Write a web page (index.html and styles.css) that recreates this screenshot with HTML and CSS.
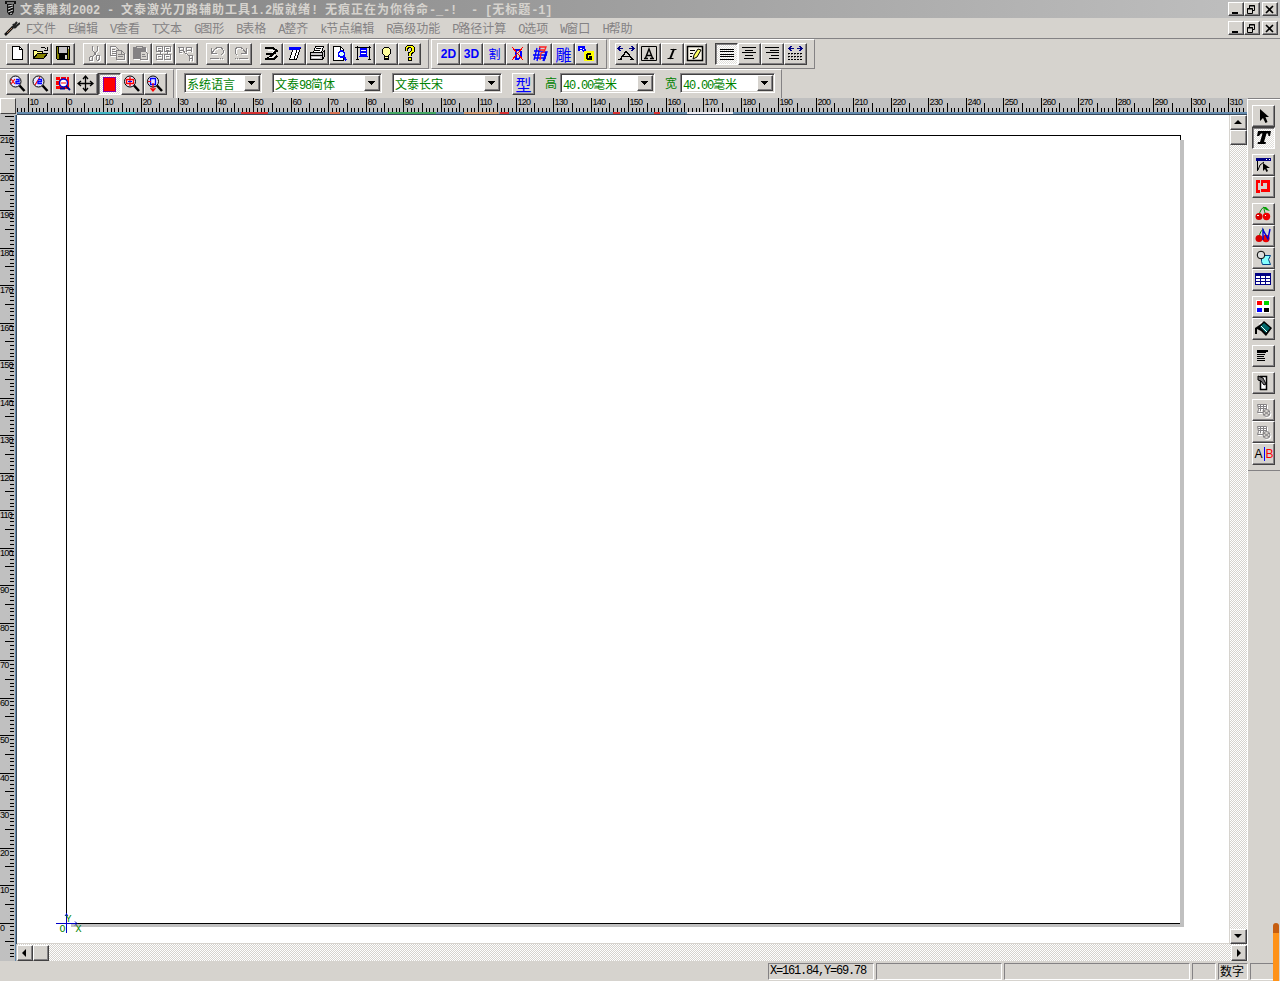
FILE: index.html
```html
<!DOCTYPE html>
<html lang="zh-CN">
<head>
    <meta charset="UTF-8">
    <title>文泰雕刻2002</title>
    <link rel="stylesheet" href="styles.css">
</head>
<body>
<div class="window">
    <header class="titlebar">
        <svg class="app-icon" viewBox="0 0 16 18"><path d="M3 1h11v3h-2v8l-2 3h-3l-2-3V4H3z" fill="#111"/><path d="M5 3h7M6 6l5-1M6 9l5-2M6 12l5-2M8 14l2-1" stroke="#ddd"/></svg>
        <h1>文泰雕刻<span>2002 - </span>文泰激光刀路辅助工具<span>1.2</span>版就绪<span>! </span>无痕正在为你待命<span>-_-!&nbsp; - [</span>无标题<span>-1]</span></h1>
        <div class="win-buttons">
            <button><svg viewBox="0 0 15 13"><path d="M4 9h6v2H4z"/></svg></button>
            <button><svg viewBox="0 0 15 13"><path d="M5.500 5V2.500h5v5H9M5 3h6M3.500 5.500h5v5h-5zM3 6h6" fill="none" stroke="#000"/></svg></button>
            <button><svg viewBox="0 0 15 13"><path d="M4 3l7 7M11 3l-7 7" stroke="#000" stroke-width="1.6"/></svg></button>
        </div>
    </header>
    <nav class="menubar">
        <svg class="app-icon" viewBox="0 0 18 20"><path d="M3 17l8-8" stroke="#111" stroke-width="2.500"/><path d="M10 10l5-6M12 10l6-5M11 6l3 4" stroke="#222" stroke-width="2"/><path d="M5 15l5-5" stroke="#a07050"/></svg>
        <ul>
            <li><span>F</span>文件</li>
            <li><span>E</span>编辑</li>
            <li><span>V</span>查看</li>
            <li><span>T</span>文本</li>
            <li><span>G</span>图形</li>
            <li><span>B</span>表格</li>
            <li><span>A</span>整齐</li>
            <li><span>k</span>节点编辑</li>
            <li><span>R</span>高级功能</li>
            <li><span>P</span>路径计算</li>
            <li><span>O</span>选项</li>
            <li><span>W</span>窗口</li>
            <li><span>H</span>帮助</li>
        </ul>
        <div class="win-buttons">
            <button><svg viewBox="0 0 15 13"><path d="M4 9h6v2H4z"/></svg></button>
            <button><svg viewBox="0 0 15 13"><path d="M5.500 5V2.500h5v5H9M5 3h6M3.500 5.500h5v5h-5zM3 6h6" fill="none" stroke="#000"/></svg></button>
            <button><svg viewBox="0 0 15 13"><path d="M4 3l7 7M11 3l-7 7" stroke="#000" stroke-width="1.6"/></svg></button>
        </div>
    </nav>

    <div class="toolbar-row">
        <div class="toolbar main-bar">
            <div class="group">
                <button class="tool"><svg viewBox="0 0 23 22"><path d="M6.500 3.500h7l3 3v10h-10z" fill="#fff" stroke="#000"/><path d="M13.500 3v3.500H17" fill="none" stroke="#000"/></svg></button>
                <button class="tool"><svg viewBox="0 0 23 22"><path d="M4.500 15.500v-8h3l1 1h5v3" fill="#ffff84" stroke="#000"/><path d="M4.500 15.500l4-5h10l-4 5z" fill="#848200" stroke="#000"/><path d="M11.500 5.500l1-1h3l2 2M18.500 3.500v3.500H15" fill="none" stroke="#000"/></svg></button>
                <button class="tool"><svg viewBox="0 0 23 22"><path d="M4.500 3.500h13v13h-12l-1-1z" fill="#848200" stroke="#000"/><path d="M7 4h8v6H7z" fill="#c6c3c6"/><path d="M7 11h9v5H7z" fill="#000"/><path d="M13 12h2v4h-2zM16 4h1v2h-1z" fill="#d6d3ce"/><path d="M6.500 4v6.500h9V4" fill="none" stroke="#000"/></svg></button>
            </div>
            <div class="group disabled">
                <button class="tool"><svg viewBox="0 0 23 22"><path d="M9.500 3v4l4 6M14.500 3v4l-4 6"/><path d="M7.500 13.500h2v4h-3v-3zM13.500 12.500h3v4l-2 1-1-1z"/></svg></button>
                <button class="tool"><svg viewBox="0 0 23 22"><path d="M4.500 3.500h5l3 3v6h-8zM6 6.500h3M6 8.500h5M6 10.500h5"/><path d="M10.500 7.500h5l3 3v6h-8z" fill="#d6d3ce"/><path d="M15.500 8v3H18M12 11.500h3M12 13.500h5"/></svg></button>
                <button class="tool"><svg viewBox="0 0 23 22"><path d="M4.500 4.500h12v11h-12z" fill="#848284"/><path d="M7.500 3.500h6v2h-6z" fill="#d6d3ce"/><path d="M11.500 8.500h5l2 2v6h-7z" fill="#d6d3ce"/><path d="M13 11.500h3M13 13.500h4"/></svg></button>
                <button class="tool"><svg viewBox="0 0 23 22"><path d="M4.500 3.500h6v5h-6zM12.500 3.500h6v5h-6zM4.500 11.500h6v5h-6zM12.500 11.500h6v5h-6zM6 5.500h3M6 7.500h3M14 5.500h3M14 7.500h3M6 13.500h3M14 13.500h3M8.500 9v3M15.500 9v3"/></svg></button>
                <button class="tool"><svg viewBox="0 0 23 22"><path d="M3 4.500h5v3l2 2M4.500 4v5h2M4.500 7.500h3M11.500 9V4.500h5v4M11.500 7.500h5M14.500 18v-5.500h3V18M14.500 15.500h3M8 8.500l6 4M10 10.500h2"/></svg></button>
            </div>
            <div class="group disabled">
                <button class="tool"><svg viewBox="0 0 23 22"><path d="M5.500 5v5.500H11M6 10l3-4 3-2h3l2 3v3l-2 2M4 15.500h9M14 15.500h1M16 15.500h1"/></svg></button>
                <button class="tool"><svg viewBox="0 0 23 22"><path d="M17.500 5v5.500H12M17 10l-3-4-3-2H8L6 7v3l2 2M10 15.500h9M8 15.500h1M6 15.500h1"/></svg></button>
            </div>
            <div class="group">
                <button class="tool"><svg viewBox="0 0 23 22"><path d="M5 5h8l4 3-5 3H6M16 9l-9 7M5 16h9l3-3" fill="none" stroke="#000" stroke-width="2"/><path d="M8 7h5l1 1-2 2M9 14h4l2-2" stroke="#fff" fill="none"/></svg></button>
                <button class="tool"><svg viewBox="0 0 23 22"><path d="M7.500 4.500h10l-4 12h-7l3-9" fill="#fff" stroke="#000"/><path d="M14 7l-3 9" stroke="#000"/><path d="M6 4h12l-1 3H6z" fill="#0000ff"/></svg></button>
                <button class="tool"><svg viewBox="0 0 23 22"><path d="M7.500 9.500l2-6h8l-2 6" fill="#fff" stroke="#000"/><path d="M10 5.500h5M9 7.500h5" stroke="#000"/><path d="M4.500 9.500h12l2-2v6l-2 3h-12z" fill="#c6c3c6" stroke="#000"/><path d="M4 12.500h12M16.500 10v6" stroke="#000"/><path d="M6 14.500h8" stroke="#fff"/></svg></button>
                <button class="tool"><svg viewBox="0 0 23 22"><path d="M4.500 3.500h7l3 3v11h-10z" fill="#fff" stroke="#000"/><path d="M11.500 4v3H14" fill="none" stroke="#000"/><circle cx="12.500" cy="11" r="3" fill="#d6ffff" stroke="#0000ff" stroke-width="1.500"/><path d="M14.500 13.500l3 4" stroke="#0000ff" stroke-width="2"/></svg></button>
                <button class="tool"><svg viewBox="0 0 23 22"><path d="M3 4.500h16M5.500 3v14M17.500 3v14M4 16.500h3M16 16.500h3" stroke="#000"/><path d="M8 5h7v9H8z" fill="#0000ff"/><path d="M9 7.500h5M9 10.500h5" stroke="#fff"/><path d="M7 13.500h9" stroke="#0000ff"/></svg></button>
                <button class="tool"><svg viewBox="0 0 23 22"><path d="M9.500 12.500l-2-2v-4l2-2h4l2 2v4l-2 2v4h-4zM9 13.500h5M9 15.500h5" fill="#ffff9c" stroke="#000"/></svg></button>
                <button class="tool"><svg viewBox="0 0 23 22"><path d="M8.500 8V5l2-1.500h3L15 5v3l-3 2.500V13" fill="none" stroke="#000" stroke-width="3.500"/><path d="M8.500 7.500V5l2-1.500h3L15 5v3l-3 2.500v2" fill="none" stroke="#ffff00" stroke-width="1.500"/><path d="M10 14h4v4h-4z"/><path d="M11 15h2v2h-2z" fill="#ff0"/></svg></button>
            </div>
        </div>
        <div class="toolbar cut-bar">
            <div class="group">
                <button class="tool blue-bold">2D</button>
                <button class="tool blue-bold">3D</button>
                <button class="tool blue-cjk small">割</button>
                <button class="tool"><svg viewBox="0 0 23 22"><path d="M9 6.500h4l2 2v5l-2 2H9M10 6v9" stroke="#0000ff" stroke-width="2" fill="none"/><path d="M6 4l11 13M17 4L6 17" stroke="#ff0000"/></svg></button>
                <button class="tool smooth"><svg viewBox="0 0 23 22"><path d="M8 5l-3 12M11 4L8 18M5 8h7M4 12h14M12 9h6l-3 9M17 9l-3 9M5 15h12" stroke="#0000ff" stroke-width="1.300" fill="none"/><path d="M10 4h7l-2 5-3 1-1 7M10 7h6" stroke="#ff2020" stroke-width="1.300" fill="none"/></svg></button>
                <button class="tool blue-cjk">雕</button>
                <button class="tool"><svg viewBox="0 0 23 22"><path d="M3 3h7v3h1v3H8V8H3z" fill="#0000ff"/><path d="M5 5h2M8 6h1M5 7h2" stroke="#fff"/><path d="M9 8h10v10H9z" fill="#ffff00"/><path d="M16 11h-3l-1 1v3l1 1h3v-2h-2" fill="none" stroke="#000" stroke-width="1.500"/></svg></button>
            </div>
        </div>
        <div class="toolbar text-bar">
            <div class="group">
                <button class="tool"><svg viewBox="0 0 23 22"><path d="M3 16.500h4M15 16.500h4M5.500 16l5-7h1l6 7M8 13.500h7" fill="none" stroke="#000" stroke-width="1.400"/><path d="M3 5.500h5M5.500 3L3 5.500 5.500 8M14 5.500h5M16.500 3L19 5.500 16.500 8" fill="none" stroke="#000084"/></svg></button>
                <button class="tool smooth"><svg viewBox="0 0 23 22"><path d="M3.500 3.500h15v14h-15z" fill="none" stroke="#000"/><path d="M6 15.500h4M12 15.500h4M7.500 15l3.500-9 3.500 9M9 12.500h5" fill="none" stroke="#000" stroke-width="1.400"/></svg></button>
                <button class="tool smooth"><svg viewBox="0 0 23 22"><path d="M9.500 6.500h6M6.500 15.500h6" stroke="#000"/><path d="M13 6l-4 10" stroke="#000" stroke-width="2"/></svg></button>
                <button class="tool smooth"><svg viewBox="0 0 23 22"><path d="M3.500 3.500h15v14h-15z" fill="#f7f3e7" stroke="#000" stroke-width="1.500"/><path d="M6 7.500h5M6 10.500h3M6 13.500h2" stroke="#000"/><path d="M9 16l1-4 4-6 3 1-4 7z" fill="#ffff63" stroke="#000"/></svg></button>
            </div>
            <div class="group">
                <button class="tool pressed"><svg viewBox="0 0 23 22"><path d="M5 6.500h14M5 8.500h14M5 11.500h14M5 13.500h14M5 16.500h14" stroke="#000"/></svg></button>
                <button class="tool"><svg viewBox="0 0 23 22"><path d="M4 4.500h14M7 7.500h8M4 9.500h14M7 12.500h8M6 15.500h10" stroke="#000"/></svg></button>
                <button class="tool"><svg viewBox="0 0 23 22"><path d="M4 4.500h14M9 7.500h9M5 9.500h13M10 12.500h8M8 15.500h10" stroke="#000"/></svg></button>
                <button class="tool"><svg viewBox="0 0 23 22"><path d="M5 5.500h5M7.500 3L5 5.500 7.500 8M13 5.500h5M15.500 3l2.500 2.500L15.500 8" fill="none" stroke="#000084"/><path d="M4 10.500h15M4 13.500h15M4 16.500h15" stroke="#000" stroke-dasharray="2 1"/><path d="M4 11.500h15M4 14.500h15" stroke="#848284" stroke-dasharray="1 2"/></svg></button>
            </div>
        </div>
    </div>

    <div class="toolbar-row">
        <div class="toolbar zoom-bar">
            <div class="group">
                <button class="tool smooth"><svg viewBox="0 0 23 22"><circle class="lens" cx="9.500" cy="8.500" r="5.500"/><path d="M13.500 12.500l5 5.500" stroke="#000" stroke-width="2.500"/><path d="M5 6l4 5M9 6l-4 5" stroke="#ff0000" stroke-width="1.200"/><path d="M10 6.500h3v2h-3v2h4" fill="none" stroke="#0000ff" stroke-width="1.300"/></svg></button>
                <button class="tool smooth"><svg viewBox="0 0 23 22"><circle class="lens" cx="9.500" cy="8.500" r="5.500"/><path d="M13.500 12.500l5 5.500" stroke="#000" stroke-width="2.500"/><path d="M6 12l5-8" stroke="#ff0000" stroke-width="1.200"/><path d="M9 6.500h3.500v2H9v2h4" fill="none" stroke="#0000ff" stroke-width="1.300"/></svg></button>
                <button class="tool smooth"><svg viewBox="0 0 23 22"><path d="M4 4h13v12H4z" fill="#ff0000"/><path d="M4 7.500h3M8.500 4v2M14.500 4v2M4 12.500h3" stroke="#d6d3ce"/><circle cx="11.500" cy="10" r="4" fill="#fff" stroke="#0000d6" stroke-width="1.500"/><path d="M9 10h5" stroke="#ff8080" stroke-width="2"/><path d="M14 13l4 4M8 15.500h5" stroke="#000084" stroke-width="1.800"/></svg></button>
                <button class="tool smooth"><svg viewBox="0 0 23 22"><path d="M10.500 3.500v14M3.500 10.500h14M8 6l2.500-3L13 6M8 15l2.500 3 2.500-3M6 8l-3 2.500L6 13M15 8l3 2.500-3 2.500" fill="none" stroke="#000" stroke-width="1.300"/></svg></button>
                <button class="tool pressed"><svg viewBox="0 0 23 22"><path d="M5.500 4.500h12v14h-12z" fill="#ff0000" stroke="#8400a5"/></svg></button>
                <button class="tool smooth"><svg viewBox="0 0 23 22"><circle class="lens" cx="9" cy="8.500" r="5.500"/><path d="M13 12.500l5 5.500" stroke="#000" stroke-width="2.500"/><path d="M5.500 6.500h7v4h-7zM9 4v9" fill="none" stroke="#ff0000" stroke-width="1.300"/><path d="M7 8.500h4" stroke="#0000ff"/></svg></button>
                <button class="tool smooth"><svg viewBox="0 0 23 22"><circle class="lens" cx="9" cy="8.500" r="5.500"/><path d="M13 12.500l5 5.500" stroke="#000" stroke-width="2.500"/><path d="M6.500 5.500h5v6h-5z" fill="none" stroke="#0000ff" stroke-width="1.300"/><path d="M9 10v8M6.500 15L9 18l2.500-3M4 8.500h3" fill="none" stroke="#ff0000" stroke-width="1.200"/></svg></button>
            </div>
        </div>
        <div class="toolbar font-bar">
            <div class="combo lang">系统语言<i></i></div>
            <div class="combo">文泰<span>98</span>简体<i></i></div>
            <div class="combo">文泰长宋<i></i></div>
            <button class="tool blue-cjk type">型</button>
            <label>高</label>
            <div class="combo size"><span>40.00</span>毫米<i></i></div>
            <label>宽</label>
            <div class="combo size"><span>40.00</span>毫米<i></i></div>
        </div>
    </div>

    <main class="workspace">
        <div class="editor">
            <div class="corner"></div>
            <svg class="ruler-h" id="ruler-h" width="1230" height="17"></svg>
            <svg class="ruler-v" id="ruler-v" width="17" height="846"></svg>
            <div class="canvas">
                <div class="sheet"></div>
                <svg class="origin" viewBox="0 0 30 24" width="30" height="24"><path d="M0 10.500h20M10.500 0v20" stroke="#0000c6"/><path d="M9 3l1.500-2L12 3M19 8.500l2 2-2 2" fill="none" stroke="#0000c6"/><text x="9.500" y="9">Y</text><text x="3.500" y="19">O</text><text x="19.500" y="19">X</text></svg>
            </div>
            <div class="scroll-v">
                <b class="up"></b><b></b><b class="down"></b>
            </div>
            <div class="scroll-h">
                <b class="left"></b><b></b><b class="right"></b>
            </div>
        </div>
        <aside class="sidebar">
            <div class="side-tools">
                <div>
                    <button class="tool smooth"><svg viewBox="0 0 23 22"><path d="M8 4v12l3-3 2.500 5 2-1-2-5H17z"/></svg></button>
                    <button class="tool pressed smooth"><svg viewBox="0 0 23 22"><path d="M6 4h13l-1 5h-1.500L16 6.500h-1.500L12 15h2l-.5 2h-8l.5-2h2l2.500-8.500H9L7 9H5z"/></svg></button>
                </div>
                <div>
                    <button class="tool smooth"><svg viewBox="0 0 23 22"><path d="M4 4h15v3H4z" fill="#000084"/><path d="M14 5.500h1M17 5.500h1" stroke="#fff"/><path d="M5.500 7v10M6 16l2-5 4-3" fill="none" stroke="#000"/><path d="M11 9v8l2-2 1.500 3 1.500-1-1.500-3H18z"/></svg></button>
                    <button class="tool"><svg viewBox="0 0 23 22"><path d="M4 4h4v3H6v7h2v3H4zM9 4h9v12H9v-3h6V7h-4v3H9z" fill="#ff0000"/></svg></button>
                </div>
                <div>
                    <button class="tool smooth"><svg viewBox="0 0 23 22"><path d="M7 12c1-4 3-7 5-8 0 4 1 6 2 8" fill="none" stroke="#008200"/><path d="M11 4h3l4 4-4-1z" fill="#00a200"/><circle cx="7" cy="13.500" r="3.500" fill="#d60000"/><circle cx="14.500" cy="13.500" r="3.700" fill="#ef0000"/><path d="M5 12.500h2M13 12.500h1" stroke="#fff"/></svg></button>
                    <button class="tool smooth"><svg viewBox="0 0 23 22"><path d="M7 12c1-4 2-7 5-8" fill="none" stroke="#008200"/><circle cx="7" cy="13.500" r="3.500" fill="#d60000"/><circle cx="14" cy="13.500" r="3.700" fill="#ef0000"/><path d="M11 15V5l5 9 2-10" fill="none" stroke="#0000d6" stroke-width="1.400"/></svg></button>
                    <button class="tool smooth"><svg viewBox="0 0 23 22"><path d="M9.500 8.500h9l-2 4 2 5h-8l-1-3z" fill="#84ffff" stroke="#004284"/><circle cx="9" cy="8" r="3.800" fill="#dedfde" stroke="#000"/></svg></button>
                    <button class="tool"><svg viewBox="0 0 23 22"><path d="M3.500 4.500h15v11h-15z" fill="#fff" stroke="#000084"/><path d="M3 4h16v3H3z" fill="#000084"/><path d="M4 9.500h15M4 12.500h15M8.500 6v10M13.500 6v10" stroke="#000084"/></svg></button>
                </div>
                <div>
                    <button class="tool"><svg viewBox="0 0 23 22"><path d="M4 4h14v13H4z" fill="#fff"/><path d="M5 5h5v4H5z" fill="#ff0000"/><path d="M12 5h5v4h-5z" fill="#00d600"/><path d="M5 12h5v4H5z" fill="#0000ff"/><path d="M12 12h5v4h-5z"/></svg></button>
                    <button class="tool smooth"><svg viewBox="0 0 23 22"><path d="M3 10l6-4 3-3 8 7-6 8-5-5-4-2v5H3z"/><path d="M8 9l4-4 6 5-4 5z" fill="#00696b"/><path d="M9 8l6 6M7 6l3-2" stroke="#fff"/></svg></button>
                </div>
                <div>
                    <button class="tool"><svg viewBox="0 0 23 22"><path d="M5 5h11v2H5zM5 9h8v1H5zM5 11h7v1H5zM5 13h8v1H5z"/><path d="M5 7.500h9M5 15.500h8" stroke="#000"/></svg></button>
                </div>
                <div>
                    <button class="tool smooth"><svg viewBox="0 0 23 22"><path d="M8.500 4.500h6v13h-6z" fill="#fff" stroke="#000" stroke-width="1.500"/><path d="M6 4l5 2 3 6-2 1-3-4-3-1z" fill="#737173" stroke="#000"/></svg></button>
                </div>
                <div class="disabled">
                    <button class="tool smooth"><svg viewBox="0 0 23 22"><path d="M5.500 5.500h9v6l-3 2h-6l1-3zM6 7.500h8M6 9.500h8M8.500 5v7M11.500 5v7"/><circle cx="14.500" cy="14" r="3.500" fill="#d6d3ce"/><path d="M12 12l5 4M12 16l5-4"/></svg></button>
                    <button class="tool smooth"><svg viewBox="0 0 23 22"><path d="M5.500 5.500h9v6l-3 2h-6l1-3zM6 7.500h8M6 9.500h8M8.500 5v7M11.500 5v7"/><circle cx="14.500" cy="14" r="3.500" fill="#d6d3ce"/><path d="M12 12l5 4M12 16l5-4"/></svg></button>
                    <button class="tool ab"><em>A</em><s></s><u>B</u></button>
                </div>
            </div>
        </aside>
    </main>

    <footer class="statusbar">
        <div class="pane"><span>X=161.84,Y=69.78</span></div>
        <div class="pane"></div>
        <div class="pane"></div>
        <div class="pane"></div>
        <div class="pane">数字</div>
        <div class="pane"></div>
    </footer>
    <div class="edge-tab"></div>
</div>
<script src="rulers.js"></script>
</body>
</html>
```
FILE: styles.css
```css
:root {
    --face: #d6d3ce;
    --shadow: #848284;
    --dark: #424142;
    --green: #008200;
}

* {
    box-sizing: border-box;
}

body {
    margin: 0;
    overflow: hidden;
    background: var(--face);
    font: 12px/14px "Noto Sans CJK SC", sans-serif;
}

button {
    padding: 0;
    margin: 0;
    background: var(--face);
    border: 1px solid;
    border-color: #fff var(--dark) var(--dark) #fff;
    box-shadow: inset -1px -1px 0 var(--shadow);
}

svg {
    display: block;
}

.window {
    position: relative;
    width: 1280px;
    height: 981px;
    display: flex;
    flex-direction: column;
}

/* half-width latin next to the 12px Chinese glyphs */
h1 span,
li span,
.combo span,
.pane span {
    font-family: "Liberation Mono", monospace;
    font-size: 12px;
    line-height: 12px;
    letter-spacing: -1.2px;
    white-space: pre;
}

/* title and menu */
.titlebar {
    height: 18px;
    display: flex;
    align-items: center;
    background: linear-gradient(90deg, #808080, #c0c0c0);
    padding: 0 2px;
}

.titlebar .app-icon {
    width: 16px;
    height: 18px;
    margin-right: 2px;
}

h1 {
    margin: 0;
    font-size: 12px;
    line-height: 18px;
    font-weight: bold;
    letter-spacing: 1px;
    color: #d6d3ce;
    white-space: nowrap;
}

h1 span {
    letter-spacing: -0.2px;
}

.win-buttons {
    margin-left: auto;
    display: flex;
}

.win-buttons button {
    width: 16px;
    height: 14px;
}

.win-buttons button:last-child {
    margin-left: 2px;
}

.win-buttons svg {
    width: 15px;
    height: 13px;
    margin: -1px;
}

.menubar {
    height: 21px;
    display: flex;
    align-items: center;
    padding: 0 2px;
    border-bottom: 1px solid var(--shadow);
}

.menubar .app-icon {
    width: 18px;
    height: 20px;
}

.menubar ul {
    display: flex;
    gap: 12px;
    margin: 0;
    padding: 0 0 0 6px;
    list-style: none;
    color: var(--shadow);
}

/* toolbars */
.toolbar-row {
    display: flex;
    height: 30px;
}

.toolbar {
    display: flex;
    align-items: flex-start;
    gap: 8px;
    height: 30px;
    padding: 3px 6px 0;
    border: 1px solid;
    border-color: #fff var(--shadow) var(--shadow) #fff;
    border-left: 0;
}

.toolbar + .toolbar {
    margin-left: 2px;
    border-left: 1px solid #fff;
}

.toolbar-row + .toolbar-row {
    height: 29px;
}

.toolbar-row + .toolbar-row .toolbar {
    height: 29px;
    border-bottom: 0;
}

.main-bar { width: 429px; }
.cut-bar { width: 176px; padding-left: 5px; }
.text-bar { width: 206px; padding-left: 5px; }
.zoom-bar { width: 174px; }

.toolbar.font-bar {
    width: 606px;
    padding-left: 7px;
    gap: 10px;
}

.group {
    display: flex;
}

.tool {
    width: 23px;
    height: 22px;
    flex: none;
}

.tool svg {
    width: 23px;
    height: 22px;
    margin: -1px;
    shape-rendering: crispEdges;
}

.tool.smooth svg {
    shape-rendering: auto;
}

.tool.pressed {
    border-color: var(--dark) #fff #fff var(--dark);
    box-shadow: inset 1px 1px 0 var(--shadow);
    background: repeating-conic-gradient(#fff 0 25%, #e0deda 0 50%) 0 0 / 2px 2px;
}

.disabled svg {
    fill: none;
    stroke: var(--shadow);
    filter: drop-shadow(1px 1px 0 #fff);
}

.lens {
    fill: #e7e7ff;
    stroke: #000;
}

.blue-bold {
    color: #0000ff;
    font: bold 12px "Liberation Sans", sans-serif;
}

.blue-cjk {
    color: #0000ff;
    font: 16px/18px "Noto Sans CJK SC", sans-serif;
}

.blue-cjk.small {
    font-size: 12px;
}

.combo {
    position: relative;
    width: 110px;
    height: 20px;
    padding: 2px 2px 0;
    line-height: 15px;
    background: #fff;
    color: var(--green);
    border: 1px solid;
    border-color: var(--shadow) #fff #fff var(--shadow);
    box-shadow: inset 1px 1px 0 var(--dark), inset -1px -1px 0 var(--face);
    white-space: nowrap;
}

.combo.lang { width: 78px; }
.combo.size { width: 95px; }

.combo i {
    position: absolute;
    top: 1px;
    right: 1px;
    width: 16px;
    height: 16px;
    background: linear-gradient(#000, #000) 7px 9px / 1px 1px no-repeat,
        linear-gradient(#000, #000) 6px 8px / 3px 1px no-repeat,
        linear-gradient(#000, #000) 5px 7px / 5px 1px no-repeat,
        linear-gradient(#000, #000) 4px 6px / 7px 1px no-repeat,
        var(--face);
    background-origin: border-box;
    border: 1px solid;
    border-color: #fff var(--dark) var(--dark) #fff;
    box-shadow: inset -1px -1px 0 var(--shadow);
}

.font-bar label {
    width: 12px;
    line-height: 19px;
    color: var(--green);
}

.font-bar label + .combo {
    margin-left: -7px;
}

/* rulers, drawing area, scrollbars */
.workspace {
    display: flex;
    height: 863px;
}

.editor {
    display: grid;
    width: 1247px;
    grid-template: 17px 829px 17px / 17px 1213px 17px;
    background: #c0c0c0;
}

.corner {
    width: 16px;
    height: 16px;
    background: var(--face);
    border: 1px solid;
    border-color: #fff var(--dark) var(--dark) #fff;
}

.ruler-h {
    grid-column: 2 / 4;
}

.ruler-v {
    grid-row: 2 / 4;
    grid-column: 1;
}

.ruler-h text,
.ruler-v text {
    font: 9px "Liberation Sans", sans-serif;
    letter-spacing: -0.8px;
}

.canvas {
    position: relative;
    background: #fff;
    border-right: 1px solid var(--face);
    border-bottom: 1px solid var(--face);
}

.sheet {
    position: relative;
    margin: 20px 0 0 49px;
    width: 1115px;
    height: 789px;
    border: 1px solid #000;
    border-right: 0;
}

.sheet::before,
.sheet::after {
    content: "";
    position: absolute;
    background: #c0c0c0;
}

/* shadow on the right, with the short corner stroke above it */
.sheet::before {
    left: 1113px;
    top: 0;
    width: 4px;
    height: 791px;
    background: linear-gradient(#000, #000) 0 0 / 1px 4px no-repeat,
        linear-gradient(transparent 4px, #c0c0c0 4px);
}

.sheet::after {
    left: 4px;
    top: 788px;
    width: 1110px;
    height: 3px;
}

.origin {
    position: absolute;
    left: 39px;
    top: 798px;
}

.origin text {
    font: 10px "Liberation Mono", monospace;
    fill: var(--green);
}

.scroll-v,
.scroll-h {
    display: flex;
    background: repeating-conic-gradient(#fff 0 25%, #d6d3ce 0 50%) 0 0 / 2px 2px;
}

.scroll-v {
    flex-direction: column;
}

.scroll-h {
    grid-column: 2 / 4;
}

.scroll-v b,
.scroll-h b {
    width: 17px;
    height: 15px;
    background: var(--face);
    border: 1px solid;
    border-color: #fff var(--dark) var(--dark) #fff;
    box-shadow: inset -1px -1px 0 var(--shadow);
}

.scroll-h b {
    width: 16px;
    height: 16px;
    margin-top: 1px;
}

.scroll-v .down {
    margin-top: auto;
}

.scroll-h .right {
    margin-left: auto;
}

.up::before,
.down::before,
.left::before,
.right::before {
    content: "";
    display: block;
    width: 0;
    margin: 4px 0 0 3px;
    border: 4px solid transparent;
}

.up::before { border-top: 0; border-bottom-color: #000; }
.down::before { border-bottom: 0; border-top-color: #000; }
.left::before { margin: 3px 0 0 4px; border-left: 0; border-right-color: #000; }
.right::before { margin: 3px 0 0 5px; border-right: 0; border-left-color: #000; }

/* right-hand tools */
.sidebar {
    width: 33px;
    border-top: 1px solid var(--shadow);
    border-left: 1px solid #fff;
}

.side-tools {
    display: flex;
    flex-direction: column;
    gap: 5px;
    height: 372px;
    padding: 5px 0 0 4px;
    border-top: 1px solid #fff;
    border-bottom: 1px solid var(--shadow);
}

.side-tools .tool {
    display: block;
}

.side-tools .ab {
    display: flex;
    align-items: center;
    justify-content: center;
    font: 12px "Liberation Sans", sans-serif;
}

.ab em { font-style: normal; letter-spacing: -1px; }
.ab s { width: 1px; height: 14px; margin: 0 1px 0 2px; background: #0000ff; flex: none; }
.ab u { text-decoration: none; color: #ff0000; letter-spacing: -1px; }

/* status bar */
.statusbar {
    display: flex;
    gap: 2px;
    height: 20px;
    padding: 2px 0 0 768px;
}

.pane {
    height: 17px;
    padding-left: 1px;
    line-height: 14px;
    border: 1px solid;
    border-color: var(--shadow) #fff #fff var(--shadow);
    white-space: nowrap;
}

.pane span {
    display: block;
    line-height: 15px;
}

.pane:nth-child(1) { width: 106px; }
.pane:nth-child(2) { width: 126px; }
.pane:nth-child(3) { width: 186px; }
.pane:nth-child(4) { width: 24px; }
.pane:nth-child(5) { width: 30px; }
.pane:nth-child(6) { width: 28px; }

.edge-tab {
    position: absolute;
    right: 1px;
    bottom: 0;
    width: 6px;
    height: 58px;
    border-radius: 3px 3px 0 0;
    background: linear-gradient(#c65d10 10px, #ff9218 10px);
}
```
FILE: rulers.js
```js
const STEP = 3.75; // pixels per millimetre

function line(x1, y1, x2, y2, color, width) {
    return `<path d="M${x1} ${y1}L${x2} ${y2}" stroke="${color || "#000"}" stroke-width="${width || 1}"/>`;
}

function drawHorizontal() {
    let out = "";
    for (let mm = -13; mm <= 314; mm++) {
        const x = Math.floor(49 + mm * STEP) + 0.5;
        const top = mm % 10 === 0 ? 0 : mm % 5 === 0 ? 5 : 10;
        out += line(x, top, x, 14);
        if (mm % 10 === 0) {
            out += `<text x="${x + 1}" y="6.500">${Math.abs(mm)}</text>`;
        }
    }
    out += line(0, 15, 1231, 15, "#638aad", 2) + line(0, 16.5, 1231, 16.5, "#39495a");
    // coloured marks along the edge
    [[72, 118, "#42b6c6"], [224, 251, "#d63031"], [313, 323, "#d67152"], [371, 419, "#42a663"],
     [447, 482, "#ce9a73"], [483, 492, "#d63031"], [596, 603, "#d63031"], [637, 643, "#d63031"],
     [670, 716, "#e7e7ef"]].forEach(m => {
        out += line(m[0], 15, m[1], 15, m[2], 2);
    });
    document.getElementById("ruler-h").innerHTML = out;
}

function drawVertical() {
    let out = "";
    for (let mm = -9; mm <= 215; mm++) {
        const y = Math.floor(808 - mm * STEP) + 0.5;
        const left = mm % 10 === 0 ? 0 : mm % 5 === 0 ? 5 : 10;
        out += line(left, y, 14, y);
        if (mm % 10 === 0) {
            out += `<text x="0" y="${y + 7}">${mm}</text>`;
        }
    }
    out += line(15.5, 0, 15.5, 846, "#638aad") + line(16.5, 0, 16.5, 829, "#39495a");
    document.getElementById("ruler-v").innerHTML = out;
}

drawHorizontal();
drawVertical();
```
